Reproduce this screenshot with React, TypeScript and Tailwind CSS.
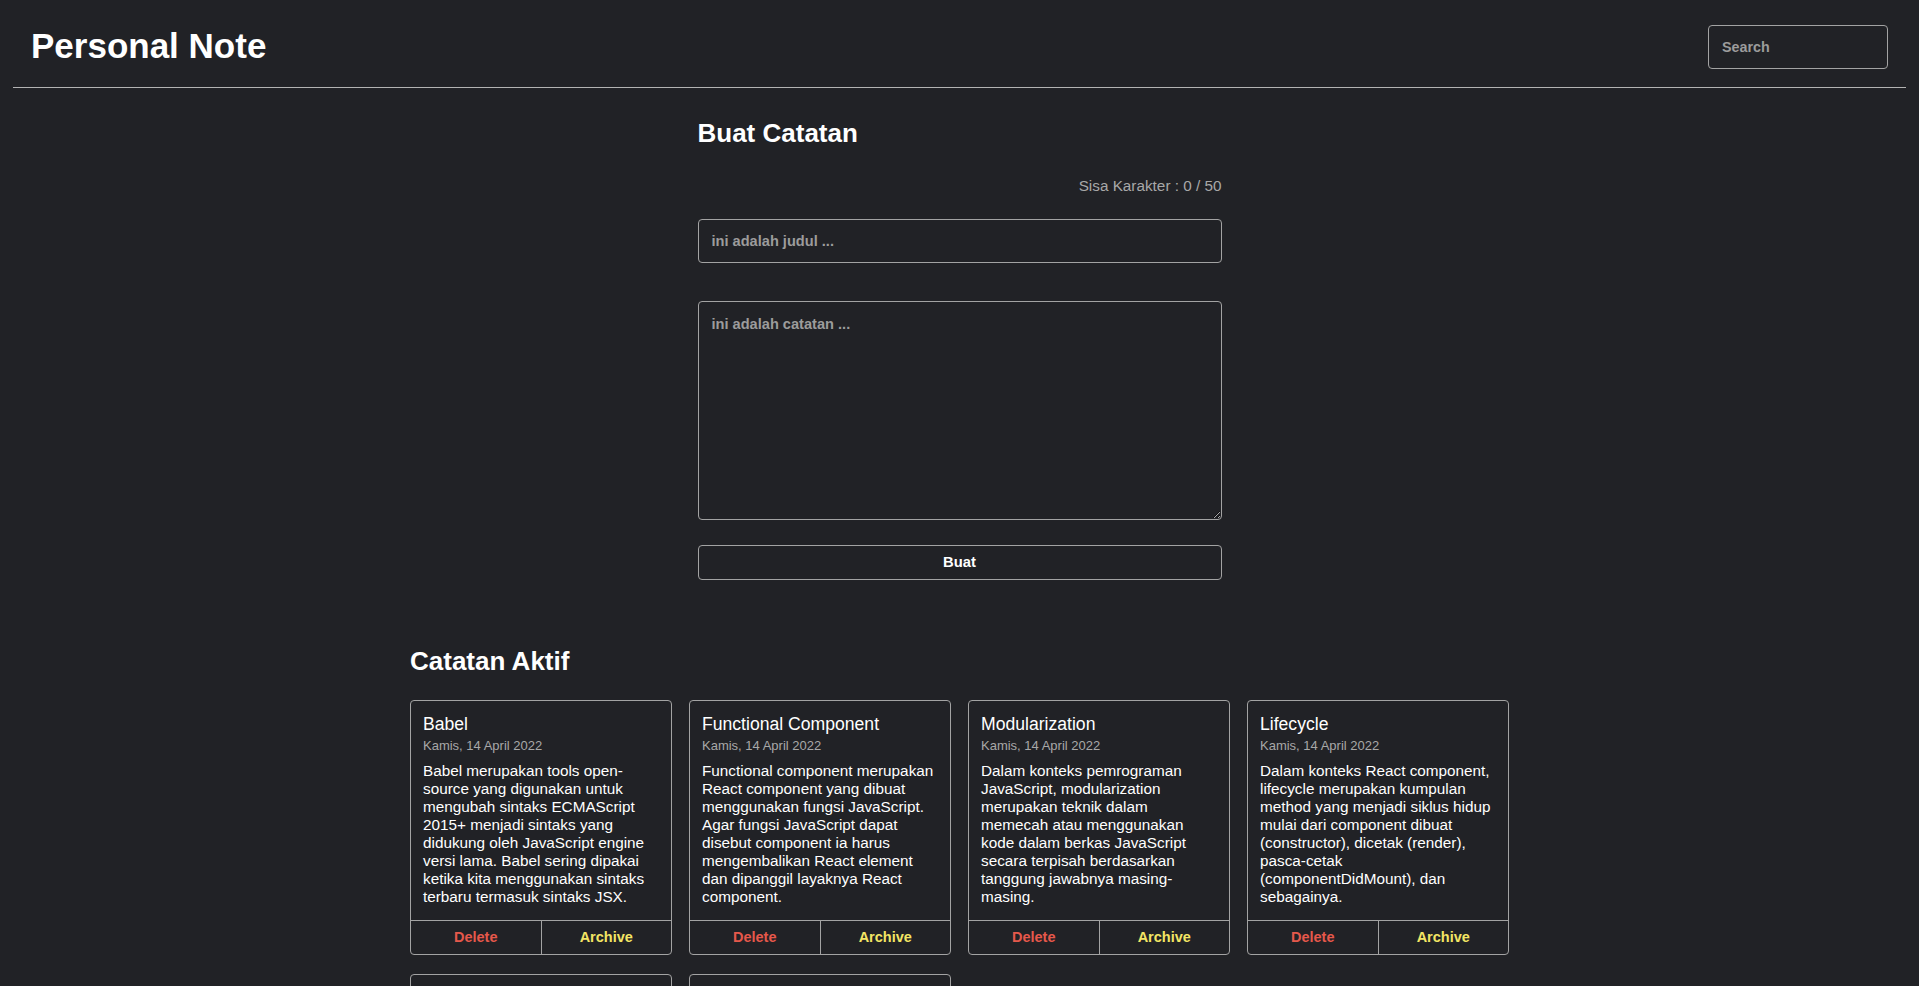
import React from "react";

type Note = { id: number; title: string; date: string; body: string };

const notes: Note[] = [
  {
    id: 1,
    title: "Babel",
    date: "Kamis, 14 April 2022",
    body: "Babel merupakan tools open-source yang digunakan untuk mengubah sintaks ECMAScript 2015+ menjadi sintaks yang didukung oleh JavaScript engine versi lama. Babel sering dipakai ketika kita menggunakan sintaks terbaru termasuk sintaks JSX.",
  },
  {
    id: 2,
    title: "Functional Component",
    date: "Kamis, 14 April 2022",
    body: "Functional component merupakan React component yang dibuat menggunakan fungsi JavaScript. Agar fungsi JavaScript dapat disebut component ia harus mengembalikan React element dan dipanggil layaknya React component.",
  },
  {
    id: 3,
    title: "Modularization",
    date: "Kamis, 14 April 2022",
    body: "Dalam konteks pemrograman JavaScript, modularization merupakan teknik dalam memecah atau menggunakan kode dalam berkas JavaScript secara terpisah berdasarkan tanggung jawabnya masing-masing.",
  },
  {
    id: 4,
    title: "Lifecycle",
    date: "Kamis, 14 April 2022",
    body: "Dalam konteks React component, lifecycle merupakan kumpulan method yang menjadi siklus hidup mulai dari component dibuat (constructor), dicetak (render), pasca-cetak (componentDidMount), dan sebagainya.",
  },
  {
    id: 5,
    title: "ESM",
    date: "Kamis, 14 April 2022",
    body: "ESM (ECMAScript Module) merupakan format modularisasi standar JavaScript.",
  },
  {
    id: 6,
    title: "Module Bundler",
    date: "Kamis, 14 April 2022",
    body: "Dalam konteks pemrograman JavaScript, module bundler merupakan tools yang digunakan untuk menggabungkan seluruh modul JavaScript yang digunakan oleh aplikasi menjadi satu berkas.",
  },
];

function NoteCard({ note }: { note: Note }) {
  return (
    <div className="flex flex-col rounded-[4px] border border-[#a3a3a3]">
      <div className="flex-1 px-3 pt-[13px] pb-[14px]">
        <h3 className="text-[17.6px] leading-[20px] font-normal text-white">{note.title}</h3>
        <p className="mt-1 text-[13px] leading-[15px] text-[#a8a8a8]">{note.date}</p>
        <p className="mt-[9px] text-[15.3px] leading-[18px] text-white">{note.body}</p>
      </div>
      <div className="flex h-[34px] border-t border-[#a3a3a3]">
        <button className="flex-1 text-[14.5px] font-bold text-[#e5584b]">Delete</button>
        <button className="flex-1 border-l border-[#a3a3a3] text-[14.5px] font-bold text-[#f3e564]">
          Archive
        </button>
      </div>
    </div>
  );
}

export default function App() {
  return (
    <div
      className="min-h-screen bg-[#212226] text-white"
      style={{ fontFamily: '"Liberation Sans", Arial, Helvetica, sans-serif' }}
    >
      <header className="mx-[13px] flex h-[88px] items-center justify-between border-b border-[#b3b3b3] pt-[6px] pl-[18px] pr-[18px]">
        <h1 className="mb-[2px] text-[35px] leading-[40px] font-bold text-white">Personal Note</h1>
        <input
          type="text"
          placeholder="Search"
          className="h-[44px] w-[180px] rounded-[4px] border border-[#a3a3a3] bg-transparent px-[13px] text-[14.3px] font-bold text-white outline-none placeholder:text-[#9c9c9c]"
        />
      </header>

      <main className="flex flex-col items-center pb-10">
        <section className="flex w-[524px] flex-col">
          <h2 className="mt-[30px] text-[26px] leading-[30px] font-bold text-white">Buat Catatan</h2>
          <p className="mt-[29px] text-right text-[15.3px] leading-[18px] text-[#a8a8a8]">
            Sisa Karakter : 0 / 50
          </p>
          <input
            type="text"
            placeholder="ini adalah judul ..."
            className="mt-[24px] h-[44px] w-full rounded-[4px] border border-[#a3a3a3] bg-transparent px-[13px] text-[14.6px] font-bold text-white outline-none placeholder:text-[#9c9c9c]"
          />
          <textarea
            placeholder="ini adalah catatan ..."
            className="mt-[38px] h-[219px] w-full rounded-[4px] border border-[#a3a3a3] bg-transparent px-[13px] py-[12px] text-[14.6px] font-bold text-white outline-none placeholder:text-[#9c9c9c]"
          />
          <button className="mt-[25px] h-[35px] w-full rounded-[4px] border border-[#a3a3a3] bg-transparent text-[14.8px] font-bold text-white">
            Buat
          </button>
        </section>

        <section className="w-[1099px]">
          <h2 className="mt-[66px] text-[26px] leading-[30px] font-bold text-white">Catatan Aktif</h2>
          <div className="mt-[24px] grid grid-cols-4 gap-x-[17px] gap-y-[19px]">
            {notes.map((n) => (
              <NoteCard key={n.id} note={n} />
            ))}
          </div>
        </section>
      </main>
    </div>
  );
}
